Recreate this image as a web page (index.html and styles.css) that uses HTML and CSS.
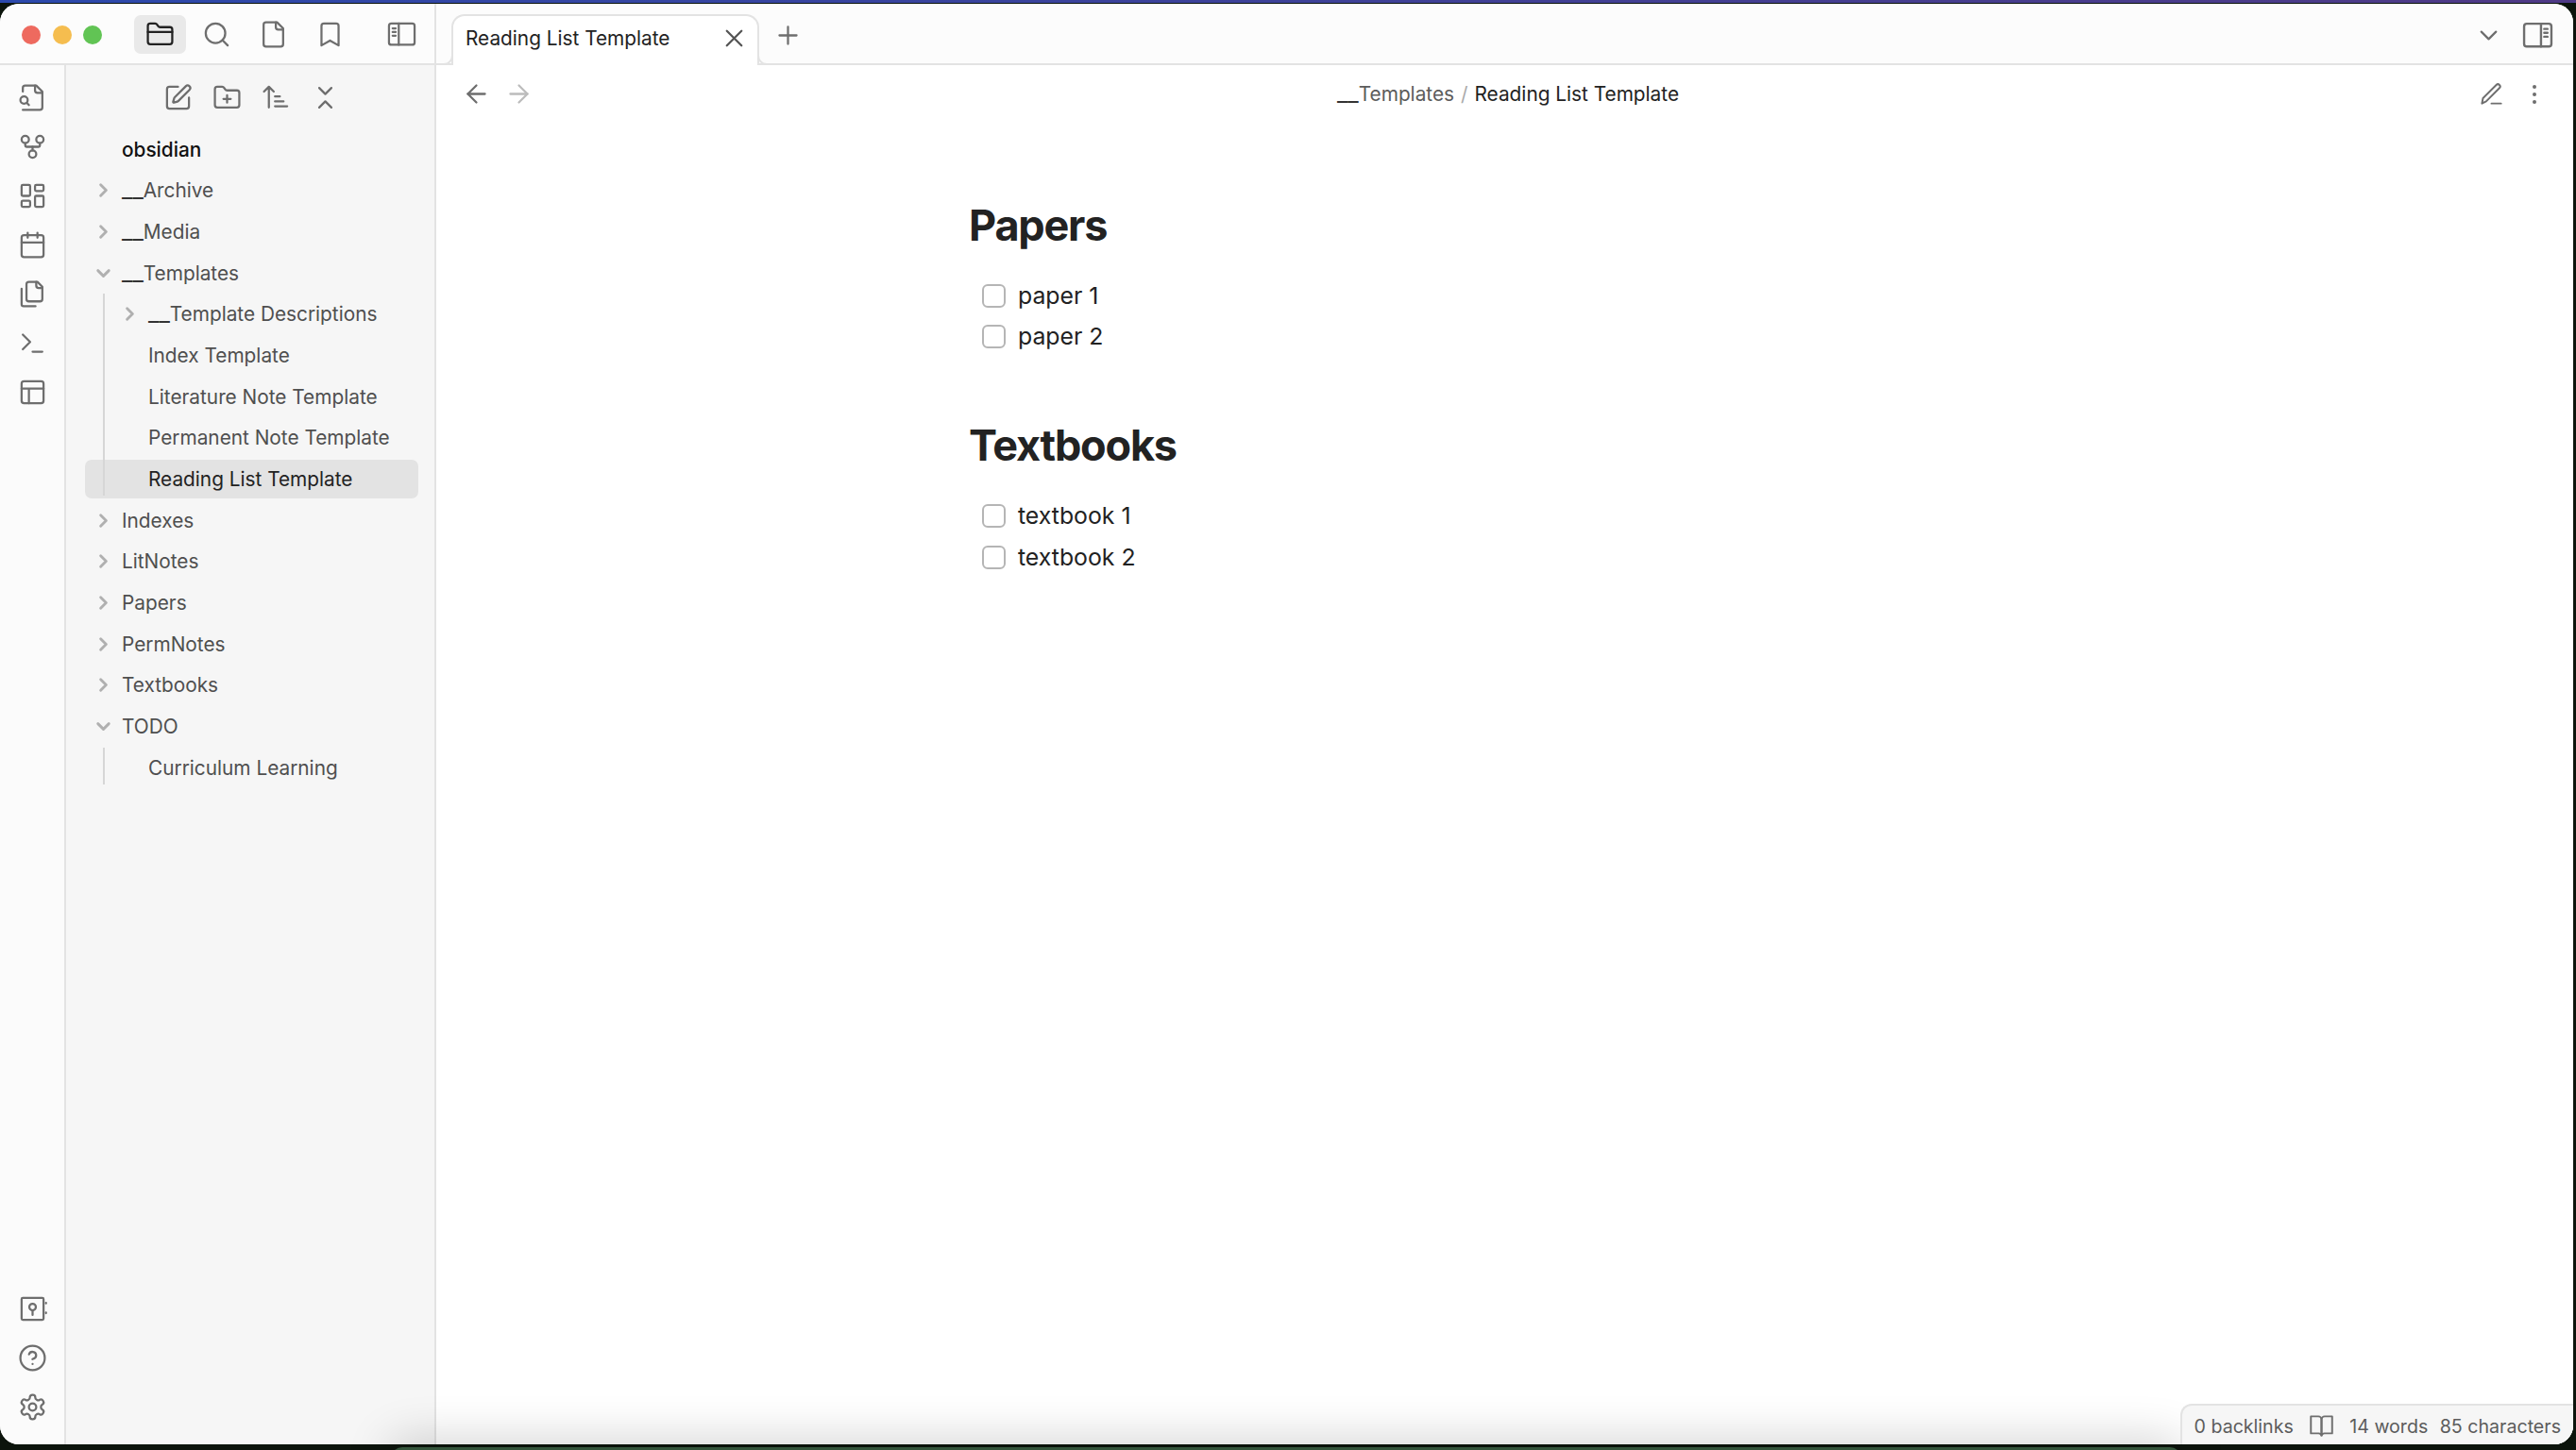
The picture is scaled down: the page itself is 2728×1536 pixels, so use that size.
FILE: index.html
```html
<!DOCTYPE html>
<html lang="en">
<head>
    <meta charset="UTF-8">
    <title>Reading List Template</title>
    <link rel="stylesheet" href="styles.css">
</head>
<body>
<svg class="sprite" xmlns="http://www.w3.org/2000/svg">
    <symbol id="i-folder" viewBox="0 0 24 24"><path d="M20 20a2 2 0 0 0 2-2V8a2 2 0 0 0-2-2h-7.9a2 2 0 0 1-1.69-.9L9.6 3.9A2 2 0 0 0 7.93 3H4a2 2 0 0 0-2 2v13a2 2 0 0 0 2 2Z"/><path d="M2 10h20"/></symbol>
    <symbol id="i-search" viewBox="0 0 24 24"><circle cx="11" cy="11" r="8"/><path d="m21 21-4.3-4.3"/></symbol>
    <symbol id="i-file" viewBox="0 0 24 24"><path d="M15 2H6a2 2 0 0 0-2 2v16a2 2 0 0 0 2 2h12a2 2 0 0 0 2-2V7Z"/><path d="M14 2v4a2 2 0 0 0 2 2h4"/></symbol>
    <symbol id="i-bookmark" viewBox="0 0 24 24"><path d="m19 21-7-4-7 4V5a2 2 0 0 1 2-2h10a2 2 0 0 1 2 2v16z"/></symbol>
    <symbol id="i-side-left" viewBox="0 0 24 24"><rect x="1.5" y="3" width="21" height="17.5" rx="2"/><path d="M9.5 3v17.5M4.5 7h2.5M4.5 10h2.5M4.5 13h2.5"/></symbol>
    <symbol id="i-side-right" viewBox="0 0 24 24"><rect x="1.5" y="3" width="21" height="17.5" rx="2"/><path d="M14.5 3v17.5M17 7h2.5M17 10h2.5M17 13h2.5"/></symbol>
    <symbol id="i-file-search" viewBox="0 0 24 24"><path d="M4 22h14a2 2 0 0 0 2-2V7l-5-5H6a2 2 0 0 0-2 2v3"/><path d="M14 2v4a2 2 0 0 0 2 2h4"/><circle cx="5" cy="14" r="3"/><path d="m9 18-1.5-1.5"/></symbol>
    <symbol id="i-fork" viewBox="0 0 24 24"><circle cx="12" cy="18" r="3"/><circle cx="6" cy="6" r="3"/><circle cx="18" cy="6" r="3"/><path d="M18 9v2c0 .6-.4 1-1 1H7c-.6 0-1-.4-1-1V9"/><path d="M12 12v3"/></symbol>
    <symbol id="i-dash" viewBox="0 0 24 24"><rect x="3" y="3" width="7" height="9" rx="1"/><rect x="14" y="3" width="7" height="5" rx="1"/><rect x="14" y="12" width="7" height="9" rx="1"/><rect x="3" y="16" width="7" height="5" rx="1"/></symbol>
    <symbol id="i-calendar" viewBox="0 0 24 24"><path d="M8 2v4M16 2v4"/><rect x="3" y="4" width="18" height="18" rx="2"/><path d="M3 10h18"/></symbol>
    <symbol id="i-files" viewBox="0 0 24 24"><path d="M20 7h-3a2 2 0 0 1-2-2V2"/><path d="M9 18a2 2 0 0 1-2-2V4a2 2 0 0 1 2-2h7l4 4v10a2 2 0 0 1-2 2Z"/><path d="M3 7.6v12.8A1.6 1.6 0 0 0 4.6 22h9.8"/></symbol>
    <symbol id="i-terminal" viewBox="0 0 24 24"><path d="m4 17 6-6-6-6"/><path d="M12 19h8"/></symbol>
    <symbol id="i-layout" viewBox="0 0 24 24"><rect x="3" y="3" width="18" height="18" rx="2"/><path d="M3 9h18M9 21V9"/></symbol>
    <symbol id="i-vault" viewBox="0 0 24 24"><rect x="3" y="3" width="18" height="18" rx="1"/><circle cx="12" cy="10.5" r="2.7"/><path d="M12 13.2V17M23 7v.5M23 15v.5"/></symbol>
    <symbol id="i-help" viewBox="0 0 24 24"><circle cx="12" cy="12" r="10"/><path d="M9.09 9a3 3 0 0 1 5.83 1c0 2-3 3-3 3"/><path d="M12 17h.01"/></symbol>
    <symbol id="i-settings" viewBox="0 0 24 24"><path d="M12.22 2h-.44a2 2 0 0 0-2 2v.18a2 2 0 0 1-1 1.73l-.43.25a2 2 0 0 1-2 0l-.15-.08a2 2 0 0 0-2.73.73l-.22.38a2 2 0 0 0 .73 2.73l.15.1a2 2 0 0 1 1 1.72v.51a2 2 0 0 1-1 1.74l-.15.09a2 2 0 0 0-.73 2.73l.22.38a2 2 0 0 0 2.73.73l.15-.08a2 2 0 0 1 2 0l.43.25a2 2 0 0 1 1 1.73V20a2 2 0 0 0 2 2h.44a2 2 0 0 0 2-2v-.18a2 2 0 0 1 1-1.73l.43-.25a2 2 0 0 1 2 0l.15.08a2 2 0 0 0 2.73-.73l.22-.39a2 2 0 0 0-.73-2.73l-.15-.08a2 2 0 0 1-1-1.74v-.5a2 2 0 0 1 1-1.74l.15-.09a2 2 0 0 0 .73-2.73l-.22-.38a2 2 0 0 0-2.73-.73l-.15.08a2 2 0 0 1-2 0l-.43-.25a2 2 0 0 1-1-1.73V4a2 2 0 0 0-2-2z"/><circle cx="12" cy="12" r="3"/></symbol>
    <symbol id="i-edit" viewBox="0 0 24 24"><path d="M12 3H5a2 2 0 0 0-2 2v14a2 2 0 0 0 2 2h14a2 2 0 0 0 2-2v-7"/><path d="M18.375 2.625a1 1 0 0 1 3 3l-9.013 9.014a2 2 0 0 1-.853.505l-2.873.84a.5.5 0 0 1-.62-.62l.84-2.873a2 2 0 0 1 .506-.852z"/></symbol>
    <symbol id="i-folder-plus" viewBox="0 0 24 24"><path d="M12 10v6M9 13h6"/><path d="M20 20a2 2 0 0 0 2-2V8a2 2 0 0 0-2-2h-7.9a2 2 0 0 1-1.69-.9L9.6 3.9A2 2 0 0 0 7.93 3H4a2 2 0 0 0-2 2v13a2 2 0 0 0 2 2Z"/></symbol>
    <symbol id="i-sort" viewBox="0 0 24 24"><path d="M11 11h4M11 15h7M11 19h10M6 20V3M2 7l4-4 4 4"/></symbol>
    <symbol id="i-collapse" viewBox="0 0 24 24"><path d="m7 20 5-5 5 5"/><path d="m7 4 5 5 5-5"/></symbol>
    <symbol id="i-right" viewBox="0 0 24 24"><path d="m9 18 6-6-6-6"/></symbol>
    <symbol id="i-down" viewBox="0 0 24 24"><path d="m6 9 6 6 6-6"/></symbol>
    <symbol id="i-x" viewBox="0 0 24 24"><path d="M18 6 6 18M6 6l12 12"/></symbol>
    <symbol id="i-plus" viewBox="0 0 24 24"><path d="M5 12h14M12 5v14"/></symbol>
    <symbol id="i-back" viewBox="0 0 24 24"><path d="m12 19-7-7 7-7"/><path d="M19 12H5"/></symbol>
    <symbol id="i-forward" viewBox="0 0 24 24"><path d="M5 12h14"/><path d="m12 5 7 7-7 7"/></symbol>
    <symbol id="i-pencil" viewBox="0 0 24 24"><path d="M12 21h9"/><path d="M16.5 3.5a2.12 2.12 0 0 1 3 3L7 19l-4 2 1-5Z"/></symbol>
    <symbol id="i-book" viewBox="0 0 24 24"><path d="M2 3h7a3 3 0 0 1 3 3v15a3 3 0 0 0-3-2H2z"/><path d="M22 3h-7a3 3 0 0 0-3 3v15a3 3 0 0 1 3-2h7z"/></symbol>
</svg>

<div class="window">
    <div class="titlebar">
        <div class="title-left">
            <div class="lights">
                <span class="light red"></span>
                <span class="light yellow"></span>
                <span class="light green"></span>
            </div>
            <div class="title-tools">
                <span class="tool active"><svg class="icon"><use href="#i-folder"/></svg></span>
                <span class="tool"><svg class="icon"><use href="#i-search"/></svg></span>
                <span class="tool"><svg class="icon"><use href="#i-file"/></svg></span>
                <span class="tool"><svg class="icon"><use href="#i-bookmark"/></svg></span>
            </div>
            <svg class="icon side-toggle"><use href="#i-side-left"/></svg>
        </div>
        <div class="tabs">
            <div class="tab">
                <span class="tab-title">Reading List Template</span>
                <svg class="icon tab-close"><use href="#i-x"/></svg>
            </div>
            <svg class="icon tab-plus"><use href="#i-plus"/></svg>
            <div class="tabs-end">
                <svg class="icon"><use href="#i-down"/></svg>
                <svg class="icon side-toggle-right"><use href="#i-side-right"/></svg>
            </div>
        </div>
    </div>

    <div class="panes">
        <div class="ribbon">
            <div class="ribbon-group">
                <svg class="icon"><use href="#i-file-search"/></svg>
                <svg class="icon"><use href="#i-fork"/></svg>
                <svg class="icon"><use href="#i-dash"/></svg>
                <svg class="icon"><use href="#i-calendar"/></svg>
                <svg class="icon"><use href="#i-files"/></svg>
                <svg class="icon"><use href="#i-terminal"/></svg>
                <svg class="icon"><use href="#i-layout"/></svg>
            </div>
            <div class="ribbon-group">
                <svg class="icon"><use href="#i-vault"/></svg>
                <svg class="icon"><use href="#i-help"/></svg>
                <svg class="icon"><use href="#i-settings"/></svg>
            </div>
        </div>

        <div class="sidebar">
            <div class="nav-tools">
                <svg class="icon"><use href="#i-edit"/></svg>
                <svg class="icon"><use href="#i-folder-plus"/></svg>
                <svg class="icon"><use href="#i-sort"/></svg>
                <svg class="icon"><use href="#i-collapse"/></svg>
            </div>
            <div class="tree">
                <div class="row root">obsidian</div>
                <div class="row"><svg class="chev"><use href="#i-right"/></svg><span class="us">__</span>Archive</div>
                <div class="row"><svg class="chev"><use href="#i-right"/></svg><span class="us">__</span>Media</div>
                <div class="row"><svg class="chev"><use href="#i-down"/></svg><span class="us">__</span>Templates</div>
                <div class="children">
                    <div class="row"><svg class="chev"><use href="#i-right"/></svg><span class="us">__</span>Template Descriptions</div>
                    <div class="row">Index Template</div>
                    <div class="row">Literature Note Template</div>
                    <div class="row">Permanent Note Template</div>
                    <div class="row selected">Reading List Template</div>
                </div>
                <div class="row"><svg class="chev"><use href="#i-right"/></svg>Indexes</div>
                <div class="row"><svg class="chev"><use href="#i-right"/></svg>LitNotes</div>
                <div class="row"><svg class="chev"><use href="#i-right"/></svg>Papers</div>
                <div class="row"><svg class="chev"><use href="#i-right"/></svg>PermNotes</div>
                <div class="row"><svg class="chev"><use href="#i-right"/></svg>Textbooks</div>
                <div class="row"><svg class="chev"><use href="#i-down"/></svg>TODO</div>
                <div class="children">
                    <div class="row">Curriculum Learning</div>
                </div>
            </div>
        </div>

        <div class="main">
            <div class="view-header">
                <div class="nav-arrows">
                    <svg class="icon"><use href="#i-back"/></svg>
                    <svg class="icon off"><use href="#i-forward"/></svg>
                </div>
                <div class="crumbs">
                    <span class="crumb-parent"><span class="us">__</span>Templates</span>
                    <span class="crumb-sep">/</span>
                    <span class="crumb-current">Reading List Template</span>
                </div>
                <div class="view-actions">
                    <svg class="icon pencil"><use href="#i-pencil"/></svg>
                    <svg class="dots" viewBox="0 0 6 24"><circle cx="3" cy="4" r="2"/><circle cx="3" cy="12" r="2"/><circle cx="3" cy="20" r="2"/></svg>
                </div>
            </div>
            <div class="note">
                <h2>Papers</h2>
                <ul class="tasks">
                    <li><span class="check"></span>paper 1</li>
                    <li><span class="check"></span>paper 2</li>
                </ul>
                <h2>Textbooks</h2>
                <ul class="tasks">
                    <li><span class="check"></span>textbook 1</li>
                    <li><span class="check"></span>textbook 2</li>
                </ul>
            </div>
        </div>
    </div>
</div>

<div class="dock"></div>

<div class="status">
    <span>0 backlinks</span>
    <svg class="icon book"><use href="#i-book"/></svg>
    <span>14 words</span>
    <span>85 characters</span>
</div>
</body>
</html>
```

FILE: styles.css
```css
*{
    box-sizing: border-box;
}
html,body{
    margin: 0;
    height: 100%;
}
body{
    width: 2728px;
    height: 1536px;
    position: relative;
    overflow: hidden;
    padding: 4px 3px 6px 0;
    background: linear-gradient(90deg, #2c49ac, #4f3a86) no-repeat 0 0 / 100% 3px, #0c140c;
    font-family: Inter, "Liberation Sans", sans-serif;
    font-size: 20.8px;
    color: #222;
}
.sprite{
    display: none;
}
.icon{
    width: 31px;
    height: 31px;
    fill: none;
    stroke: #6e6e6e;
    stroke-width: 1.75;
    stroke-linecap: round;
    stroke-linejoin: round;
    flex: none;
}
/* the underscores are wider in the reference font */
.us{
    font-size: 1.2em;
    line-height: 0;
    color: #333;
}

.window{
    height: 100%;
    display: flex;
    flex-direction: column;
    background: #fff;
    border-radius: 20px;
    overflow: hidden;
}

/* title bar */
.titlebar{
    height: 65px;
    display: flex;
    flex: none;
    background: #fcfcfc;
    border-bottom: 2px solid #e3e3e3;
}
.title-left{
    width: 462px;
    flex: none;
    display: flex;
    align-items: center;
    padding-left: 23px;
    border-right: 2px solid #e3e3e3;
    margin-bottom: -2px;
}
.lights{
    display: flex;
    gap: 12.5px;
}
.light{
    width: 20px;
    height: 20px;
    border-radius: 50%;
}
.red{ background: #ee6a5f; }
.yellow{ background: #f5bd4f; }
.green{ background: #61c454; }
.title-tools{
    display: flex;
    gap: 5px;
    margin-left: 34px;
}
.tool{
    width: 55px;
    height: 41px;
    display: flex;
    align-items: center;
    justify-content: center;
    border-radius: 7px;
}
.tool.active{
    background: #e9e9e9;
}
.tool.active .icon{
    stroke: #222;
}
.side-toggle{
    margin-left: 33px;
}
.tabs{
    flex: 1;
    display: flex;
    align-items: flex-start;
    padding-left: 16px;
}
.tab{
    width: 326px;
    height: 54px;
    margin-top: 11px;
    display: flex;
    align-items: center;
    justify-content: space-between;
    padding: 0 9px 6px 13px;
    background: #fff;
    border: 2px solid #e3e3e3;
    border-bottom: 0;
    border-radius: 14px 14px 0 0;
    position: relative;
}
.tab:before,.tab:after{
    content: "";
    position: absolute;
    bottom: 0;
    width: 10px;
    height: 10px;
    border-bottom: 2px solid #e3e3e3;
}
.tab:before{
    left: -12px;
    border-right: 2px solid #e3e3e3;
    border-bottom-right-radius: 10px;
}
.tab:after{
    right: -12px;
    border-left: 2px solid #e3e3e3;
    border-bottom-left-radius: 10px;
}
.tab-title{
    color: #222;
}
.tab-close{
    stroke: #555;
}
.tab-plus{
    margin: 18px 0 0 15px;
}
.tabs-end{
    margin-left: auto;
    margin-top: 17px;
    display: flex;
    align-items: center;
    gap: 20px;
    padding-right: 21px;
}
.side-toggle-right{
    width: 33px;
    height: 33px;
}

/* panes */
.panes{
    flex: 1;
    display: flex;
    min-height: 0;
}
.ribbon{
    width: 70px;
    flex: none;
    display: flex;
    flex-direction: column;
    justify-content: space-between;
    align-items: center;
    padding: 19px 0 24px;
    background: #fbfbfb;
    border-right: 2px solid #e3e3e3;
}
.ribbon-group{
    display: flex;
    flex-direction: column;
    gap: 21px;
}
.sidebar{
    width: 392px;
    flex: none;
    background: #f6f6f6;
    border-right: 2px solid #e3e3e3;
}
.nav-tools{
    display: flex;
    justify-content: center;
    gap: 21px;
    padding: 19px 0 0 3px;
}
.tree{
    padding: 18.5px 17px 0 20px;
}
.row{
    height: 41px;
    line-height: 41px;
    margin-bottom: 2.68px;
    padding-left: 39px;
    position: relative;
    color: #4f4f4f;
    border-radius: 7px;
    white-space: nowrap;
}
.root{
    color: #111;
    font-weight: 500;
}
.chev{
    position: absolute;
    left: 8px;
    top: 9px;
    width: 23px;
    height: 23px;
    fill: none;
    stroke: #b0b0b0;
    stroke-width: 3;
    stroke-linecap: round;
    stroke-linejoin: round;
}
.children{
    position: relative;
}
.children .row{
    padding-left: 67px;
}
.children .chev{
    left: 36px;
}
.children:before{
    content: "";
    position: absolute;
    z-index: 1;
    left: 19px;
    top: -1px;
    bottom: 3px;
    width: 2px;
    background: #d6d6d6;
}
.row.selected{
    background: #e3e3e3;
    color: #222;
}

/* main */
.main{
    flex: 1;
    min-width: 0;
    background: #fff;
}
.view-header{
    height: 61px;
    display: flex;
    align-items: center;
    justify-content: space-between;
    padding: 0 38px 0 27px;
    color: #5c5c5c;
}
.nav-arrows{
    display: flex;
    gap: 14px;
}
.nav-arrows .off{
    stroke: #bcbcbc;
}
.crumbs{
    display: flex;
    gap: 7px;
    margin-left: 4px;
}
.crumb-parent{
    color: #5c5c5c;
}
.crumb-sep{
    color: #aaa;
}
.crumb-current{
    color: #222;
}
.view-actions{
    display: flex;
    align-items: center;
    gap: 29px;
}
.pencil{
    width: 27px;
    height: 27px;
}
.dots{
    width: 6px;
    height: 24px;
    fill: #6e6e6e;
}
.note{
    width: 1135px;
    margin: 0 auto;
    padding-top: 73px;
}
.note h2{
    margin: 0;
    height: 72px;
    line-height: 72px;
    font-size: 45px;
    font-weight: 700;
    letter-spacing: -1.2px;
    color: #222;
}
.tasks{
    list-style: none;
    margin: 16px 0 58px;
    padding: 0 0 0 14px;
}
.tasks li{
    height: 43.6px;
    display: flex;
    align-items: center;
    font-size: 24.8px;
    color: #222;
}
.check{
    width: 25px;
    height: 25px;
    margin: 1px 13px 0 0;
    border: 2px solid #b5b5b5;
    border-radius: 6px;
    background: #fff;
}

/* wallpaper dock under the window, only its top edge shows */
.dock{
    position: absolute;
    left: 414px;
    width: 1896px;
    top: 1533px;
    height: 40px;
    background: #33543a;
    border-radius: 12px 12px 0 0;
    box-shadow: 0 -6px 50px rgba(0,0,0,.2);
}
.status{
    position: absolute;
    right: 3px;
    bottom: 6px;
    height: 43px;
    display: flex;
    align-items: center;
    gap: 12.5px;
    padding: 2px 13px 0 13px;
    font-size: 19.6px;
    color: #5c5c5c;
    background: #f6f6f6;
    border: 2px solid #e3e3e3;
    border-width: 2px 0 0 2px;
    border-radius: 12px 0 20px 0;
}
.book{
    width: 27px;
    height: 27px;
    margin: 0 4px 0 3.5px;
}
```
